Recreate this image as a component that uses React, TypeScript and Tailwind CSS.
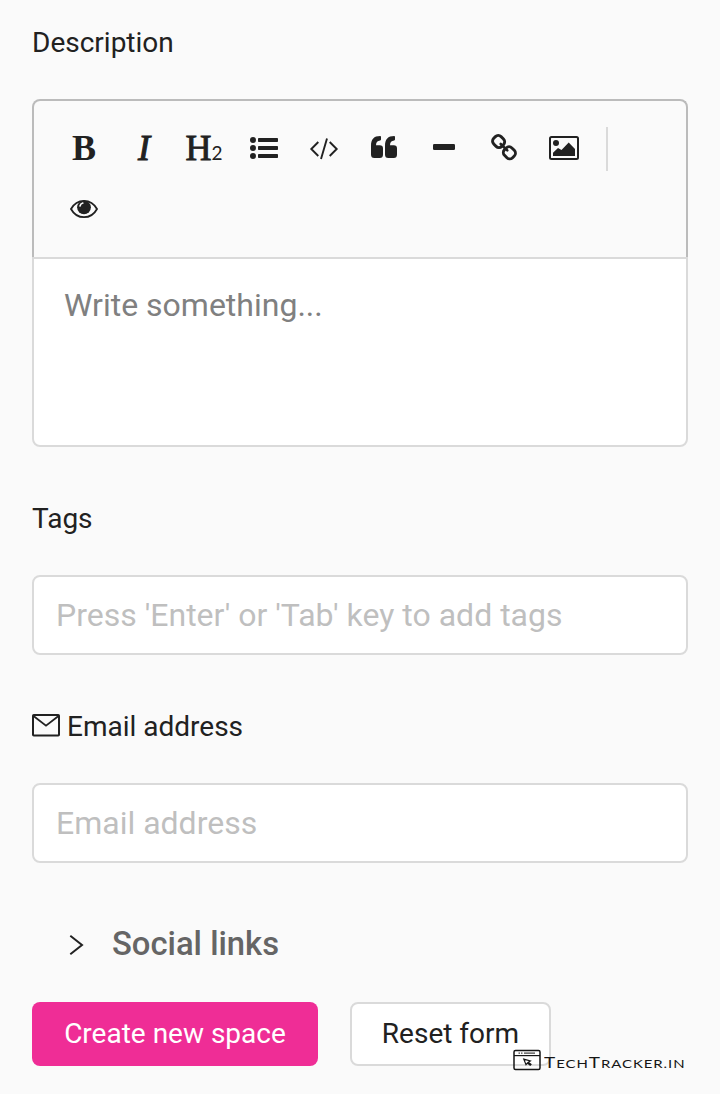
import type { ReactNode } from "react";

function Tool({ label, children }: { label: string; children: ReactNode }) {
  return (
    <button aria-label={label} className="flex h-[60px] w-[60px] shrink-0 items-center justify-center">
      {children}
    </button>
  );
}

function Icon({ children }: { children: ReactNode }) {
  return (
    <svg viewBox="0 0 60 60" className="block h-[60px] w-[60px]" fill="currentColor">
      {children}
    </svg>
  );
}

const stroke = { fill: "none", stroke: "currentColor" };

function Toolbar() {
  return (
    <div className="flex h-[158px] flex-wrap content-start rounded-t-[8px] border-2 border-b-0 border-[#bbbbbb] pt-[17px] pl-5">
      <Tool label="Bold">
        <span className="font-['Liberation_Serif',serif] text-[36px] leading-[60px] font-bold">B</span>
      </Tool>
      <Tool label="Italic">
        <span className="font-['Liberation_Serif',serif] text-[36px] leading-[60px] italic [-webkit-text-stroke:1px_#212121]">I</span>
      </Tool>
      <Tool label="Heading">
        <span className="flex items-baseline">
          <span className="font-['Liberation_Serif',serif] text-[36px] leading-[60px] [-webkit-text-stroke:0.9px_#212121]">H</span>
          <span className="font-['Lato',sans-serif] text-[19px]">2</span>
        </span>
      </Tool>
      <Tool label="List">
        <Icon>
          <circle cx="19" cy="22" r="3" />
          <circle cx="19" cy="30" r="3" />
          <circle cx="19" cy="38" r="3" />
          <rect x="24" y="20" width="20" height="4" rx="0.8" />
          <rect x="24" y="28" width="20" height="4" rx="0.8" />
          <rect x="24" y="36" width="20" height="4" rx="0.8" />
        </Icon>
      </Tool>
      <Tool label="Code">
        <Icon>
          <path {...stroke} strokeWidth="1.9" d="M24.3 24 L17.3 31 L24.3 38 M35.7 24 L42.7 31 L35.7 38 M33 20.5 L27 41" />
        </Icon>
      </Tool>
      <Tool label="Quote">
        <Icon>
          <path d="M17 28 C17 21 20 18 26.2 18 Q27 18 27 19 V21.5 Q27 22.3 26.2 22.4 C23.5 22.6 22 24.2 22 27.2 H25.8 Q29 27.2 29 30.5 V36.5 Q29 40 25.8 40 H20.3 Q17 40 17 36.5 Z" />
          <path d="M31 28 C31 21 34 18 40.2 18 Q41 18 41 19 V21.5 Q41 22.3 40.2 22.4 C37.5 22.6 36 24.2 36 27.2 H39.8 Q43 27.2 43 30.5 V36.5 Q43 40 39.8 40 H34.3 Q31 40 31 36.5 Z" />
        </Icon>
      </Tool>
      <Tool label="Horizontal rule">
        <Icon>
          <rect x="19" y="26" width="22" height="6" rx="1.3" />
        </Icon>
      </Tool>
      <Tool label="Link">
        <Icon>
          <g {...stroke} strokeWidth="2.9">
            <rect x="18.9" y="18.3" width="11.4" height="10.4" rx="4" transform="rotate(45 24.6 23.5)" />
            <rect x="29.7" y="29.6" width="11.4" height="10.4" rx="4" transform="rotate(45 35.4 34.8)" />
            <path d="M26.7 26 L33.3 32.4" strokeWidth="2.6" strokeLinecap="round" />
          </g>
        </Icon>
      </Tool>
      <Tool label="Image">
        <Icon>
          <rect x="16" y="19" width="28" height="22" rx="1.5" {...stroke} strokeWidth="2" />
          <circle cx="22" cy="25" r="3" />
          <path d="M19 38 V34.7 L24 30 L27.5 32 L34.7 24.5 L41 31 V38 Z" />
        </Icon>
      </Tool>
      <i className="mt-[9px] ml-3 h-[44px] w-[2px] shrink-0 bg-[#dadada]" />
      <div className="w-full">
        <Tool label="Preview">
          <Icon>
            <path {...stroke} strokeWidth="1.8" d="M17 31 C20 25.5 24.5 22.8 30 22.8 C35.5 22.8 40 25.5 43 31 C40 36.5 35.5 39.2 30 39.2 C24.5 39.2 20 36.5 17 31 Z" />
            <circle cx="30" cy="29.3" r="6.9" />
            <path d="M26 28 Q26.5 25.7 28.8 25.1" fill="none" stroke="#fafafa" strokeWidth="1.6" strokeLinecap="round" />
          </Icon>
        </Tool>
      </div>
    </div>
  );
}

function Watermark() {
  return (
    <div className="absolute top-[1049px] left-[513px] flex h-[22px] items-start text-[#161616]">
      <svg viewBox="0 0 28 22" className="h-[22px] w-7 shrink-0" fill="none" stroke="currentColor">
        <rect x="1" y="1.5" width="26" height="19" rx="1.5" strokeWidth="1.5" />
        <path d="M1 6.6 H27" strokeWidth="1.2" />
        <path d="M5.5 4.1 H7 M8 4.1 H9.5 M11 4.1 H22" strokeWidth="1" />
        <path d="M10.8 10.2 L17.3 12 L15.3 13.2 L18 15.4 L17.2 16.2 L14.4 14.1 L13 15.7 Z" strokeWidth="1.2" />
      </svg>
      <span className="ml-[3px] block h-[22px] w-[140px]">
        <span className="block w-max origin-left scale-x-[1.265] font-['Lato',sans-serif] text-[11.8px] leading-[27px] tracking-[0.75px] whitespace-nowrap">
          <span className="text-[15px]">T</span>ECH<span className="text-[15px]">T</span>RACKER.IN
        </span>
      </span>
    </div>
  );
}

const label = "flex h-10 items-center text-[28px] leading-10";
const field = "block h-20 w-full rounded-[8px] border-2 border-[#dadada] bg-white px-[22px] text-[32px] outline-none placeholder:text-[#bfbfbf] placeholder:opacity-100";

export default function App() {
  return (
    <main className="relative flex h-[1094px] w-[720px] flex-col overflow-hidden bg-[#fafafa] px-8 pt-[23px] font-['Roboto',sans-serif] text-[#212121]">
      <label className={label}>Description</label>
      <section className="mt-[36px]">
        <Toolbar />
        <textarea
          className="block h-[190px] w-full resize-none rounded-b-[8px] border-2 border-[#dadada] bg-white px-[30px] pt-[22px] text-[32px] leading-[48px] outline-none placeholder:text-[#808080] placeholder:opacity-100"
          placeholder="Write something..."
        />
      </section>
      <label className={`${label} mt-[52px]`}>Tags</label>
      <input className={`${field} mt-[36px]`} placeholder="Press 'Enter' or 'Tab' key to add tags" />
      <label className={`${label} mt-[52px]`}>
        <svg viewBox="0 0 28 24" className="mr-[7px] mb-[2px] h-6 w-7 shrink-0" fill="none" stroke="currentColor" strokeWidth="2">
          <rect x="1" y="1" width="26" height="20.5" rx="0.8" />
          <path d="M1.5 2 L14 11.7 L26.5 2" strokeWidth="1.8" />
        </svg>
        Email address
      </label>
      <input className={`${field} mt-[36px]`} placeholder="Email address" />
      <button className="mt-[57px] flex h-12 items-center pl-[37px] text-[32.8px] leading-[46px] font-medium text-[#656565]">
        <svg viewBox="0 0 16 24" className="mr-[27px] h-6 w-4" fill="none" stroke="#212121" strokeWidth="2">
          <path d="M1.3 3.8 L13 13 L1.3 22.2" />
        </svg>
        <span>Social links</span>
      </button>
      <div className="mt-[34px] flex gap-8">
        <button className="h-16 w-[286px] rounded-[8px] bg-[#ef2d96] text-[28px] text-white">Create new space</button>
        <button className="h-16 w-[201px] rounded-[8px] border-2 border-[#dadada] bg-white text-[28px]">Reset form</button>
      </div>
      <Watermark />
    </main>
  );
}
